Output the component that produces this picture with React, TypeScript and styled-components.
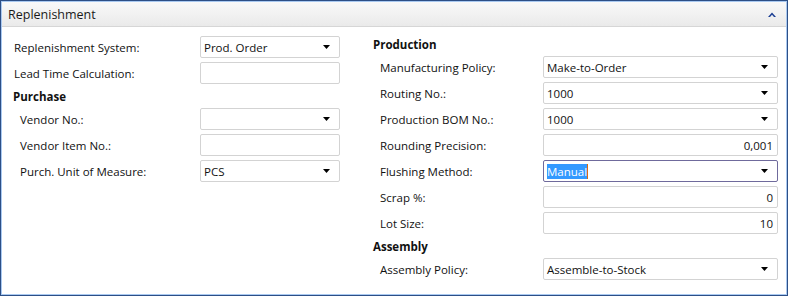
import React from "react";
import styled, { createGlobalStyle } from "styled-components";

const Global = createGlobalStyle`
  html, body { margin: 0; padding: 0; background: #ffffff; }
  body { font-family: "Open Sans", "Noto Sans", "DejaVu Sans", sans-serif; }
`;

const Frame = styled.div`
  box-sizing: border-box;
  width: 788px;
  height: 296px;
  border: 1px solid #2d4f86;
  box-shadow: inset 0 0 0 1px #a9c9f1;
  background: #ffffff;
  display: flex;
  flex-direction: column;
  overflow: hidden;
`;

const Header = styled.div`
  box-sizing: border-box;
  height: 25px;
  margin: 1px 1px 0 1px;
  padding: 0 10px 0 6px;
  background: linear-gradient(#f9f9f9, #eaeaea);
  border-bottom: 1px solid #d6d6d6;
  display: flex;
  align-items: center;
  justify-content: space-between;
  font-size: 12.5px;
  color: #1a1a1a;
`;

const Body = styled.div`
  display: flex;
  padding: 9px 0 0 12px;
`;

const Column = styled.div<{ $width: number }>`
  width: ${(p) => p.$width}px;
  display: flex;
  flex-direction: column;
  gap: 4px;
`;

const Heading = styled.div`
  height: 16px;
  line-height: 18px;
  font-size: 11.5px;
  font-weight: 700;
  color: #111;
`;

const Row = styled.div<{ $indent: number }>`
  height: 22px;
  display: flex;
  align-items: center;
  padding-left: ${(p) => p.$indent}px;
`;

const Label = styled.div<{ $width: number }>`
  width: ${(p) => p.$width}px;
  font-size: 11.5px;
  color: #111;
  white-space: nowrap;
`;

const Field = styled.div<{ $width: number; $focused?: boolean; $align?: string }>`
  box-sizing: border-box;
  width: ${(p) => p.$width}px;
  height: 22px;
  border: 1px solid ${(p) => (p.$focused ? "#6f6a9c" : "#d3d3d3")};
  border-radius: 2px;
  display: flex;
  align-items: center;
  justify-content: ${(p) => (p.$align === "right" ? "flex-end" : "space-between")};
  padding: 0 4px 0 3px;
  font-size: 11.5px;
  color: #111;
  background: #fff;
`;

const Selected = styled.span`
  background: #3399ff;
  color: #ffffff;
  border-right: 1px solid #d86a10;
`;

const Arrow = () => (
  <svg width="7" height="4" viewBox="0 0 7 4" style={{ marginRight: 5 }}>
    <path d="M0 0 H7 L3.5 4 Z" fill="#000" />
  </svg>
);

const Chevron = () => (
  <svg width="8" height="5" viewBox="0 0 8 5">
    <path d="M0 5 L4 0.5 L8 5 L6 5 L4 2.8 L2 5 Z" fill="#1c3f94" />
  </svg>
);

type F = {
  label: string;
  value?: React.ReactNode;
  dropdown?: boolean;
  align?: string;
  focused?: boolean;
};

const Fld = ({ f, labelW, fieldW, indent }: { f: F; labelW: number; fieldW: number; indent: number }) => (
  <Row $indent={indent}>
    <Label $width={labelW}>{f.label}</Label>
    <Field $width={fieldW} $focused={f.focused} $align={f.align}>
      {f.align === "right" ? f.value : <span>{f.value}</span>}
      {f.dropdown && <Arrow />}
    </Field>
  </Row>
);

export default function App() {
  return (
    <>
      <Global />
      <Frame>
        <Header>
          <span>Replenishment</span>
          <Chevron />
        </Header>
        <Body>
          <Column $width={360}>
            <Fld f={{ label: "Replenishment System:", value: "Prod. Order", dropdown: true }} labelW={186} fieldW={140} indent={1} />
            <Fld f={{ label: "Lead Time Calculation:" }} labelW={186} fieldW={140} indent={1} />
            <Heading>Purchase</Heading>
            <Fld f={{ label: "Vendor No.:", dropdown: true }} labelW={180} fieldW={140} indent={7} />
            <Fld f={{ label: "Vendor Item No.:" }} labelW={180} fieldW={140} indent={7} />
            <Fld f={{ label: "Purch. Unit of Measure:", value: "PCS", dropdown: true }} labelW={180} fieldW={140} indent={7} />
          </Column>
          <Column $width={410}>
            <Heading>Production</Heading>
            <Fld f={{ label: "Manufacturing Policy:", value: "Make-to-Order", dropdown: true }} labelW={163} fieldW={235} indent={7} />
            <Fld f={{ label: "Routing No.:", value: "1000", dropdown: true }} labelW={163} fieldW={235} indent={7} />
            <Fld f={{ label: "Production BOM No.:", value: "1000", dropdown: true }} labelW={163} fieldW={235} indent={7} />
            <Fld f={{ label: "Rounding Precision:", value: "0,001", align: "right" }} labelW={163} fieldW={235} indent={7} />
            <Fld f={{ label: "Flushing Method:", value: <Selected>Manual</Selected>, dropdown: true, focused: true }} labelW={163} fieldW={235} indent={7} />
            <Fld f={{ label: "Scrap %:", value: "0", align: "right" }} labelW={163} fieldW={235} indent={7} />
            <Fld f={{ label: "Lot Size:", value: "10", align: "right" }} labelW={163} fieldW={235} indent={7} />
            <Heading>Assembly</Heading>
            <Fld f={{ label: "Assembly Policy:", value: "Assemble-to-Stock", dropdown: true }} labelW={163} fieldW={235} indent={7} />
          </Column>
        </Body>
      </Frame>
    </>
  );
}
